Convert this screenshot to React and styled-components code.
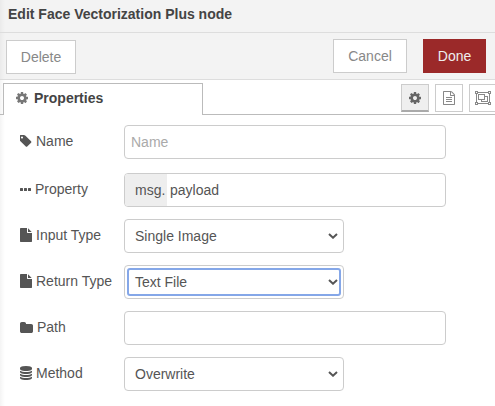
import React from "react";
import styled, { createGlobalStyle, css } from "styled-components";

const GlobalStyle = createGlobalStyle`
  * { box-sizing: border-box; }
  html, body { margin: 0; background: #fff; overflow: hidden; }
  body, input, button { font-family: "Liberation Sans", Arial, sans-serif; font-size: 14px; line-height: 20px; }
`;

const Tray = styled.main`
  width: 495px;
  height: 406px;
  overflow: hidden;
  color: #555;
  background: linear-gradient(to right, rgba(0, 0, 0, 0.045), transparent 5px), #fff;
`;

const Header = styled.header`
  height: 33px;
  padding: 4px 8px;
  border-bottom: 1px solid #ddd;
  background: linear-gradient(to right, rgba(0, 0, 0, 0.035), transparent 5px), #f3f3f3;
  color: #444;
  font-weight: bold;
`;

const Toolbar = styled.div`
  display: flex;
  align-items: flex-start;
  height: 47px;
  padding: 6px 9px 0 6px;
  border-bottom: 1px solid #ddd;
  background: linear-gradient(to right, rgba(0, 0, 0, 0.035), transparent 5px), #f3f3f3;
`;

const Button = styled.button`
  width: ${(p) => p.$width}px;
  height: 34px;
  padding: 0;
  border: 1px solid ${(p) => (p.$primary ? "#9b2929" : "#ccc")};
  background: ${(p) => (p.$primary ? "#9b2929" : "#fff")};
  color: ${(p) => (p.$primary ? "#eee" : "#888")};
  ${(p) => p.$push && css`margin-left: auto; margin-right: 16px;`}
  ${(p) => p.$drop && css`margin-top: 1px;`}
`;

const TabBar = styled.div`
  display: flex;
  height: 35px;
  padding-top: 3px;
`;

const TabEdge = styled.div`
  flex: none;
  width: 3px;
  border-bottom: 1px solid #bbb;
`;

const Tab = styled.div`
  flex: none;
  display: flex;
  align-items: center;
  gap: 6px;
  width: 200px;
  padding: 0 0 3px 12px;
  border: 1px solid #bbb;
  border-bottom: 0;
  background: #fff;
  color: #444;
  font-weight: bold;
  svg { color: #777; }
`;

const TabActions = styled.div`
  flex: 1;
  min-width: 0;
  display: flex;
  gap: 6px;
  padding: 1px 0 0 198px;
  border-bottom: 1px solid #bbb;
`;

const IconButton = styled.button`
  flex: 0 0 28px;
  display: flex;
  align-items: center;
  justify-content: center;
  height: 28px;
  padding: 0;
  border: 1px solid #ccc;
  background: #fff;
  color: #888;
  ${(p) => p.$selected && css`
    border-bottom: 2px solid #aaa;
    background: #efefef;
    color: #666;
  `}
`;

const Form = styled.div`
  display: flex;
  flex-direction: column;
  gap: 12px;
  padding: 10px 49px 0 20px;
`;

const Row = styled.div`
  display: grid;
  grid-template-columns: 104px 1fr;
  align-items: center;
  height: 34px;
  margin-bottom: ${(p) => p.$after || 0}px;
`;

const Label = styled.label`
  display: flex;
  align-items: center;
  gap: 4px;
  height: 20px;
  margin-bottom: 2px;
  white-space: nowrap;
`;

const frame = css`
  height: 34px;
  border: 1px solid #ccc;
  border-radius: 4px;
  background: #fff;
`;

const Input = styled.input`
  ${frame}
  width: 322px;
  padding: 0 6px;
  outline: 0;
  color: #555;
  &::placeholder { color: #aaa; opacity: 1; }
`;

const TypedInput = styled.div`
  ${frame}
  display: flex;
  width: 322px;
  overflow: hidden;
  line-height: 32px;
`;

const TypePrefix = styled.span`
  width: 42px;
  padding-left: 10px;
  background: #eee;
`;

const TypedValue = styled.span`
  padding-left: 3px;
`;

const SelectFrame = styled.div`
  ${frame}
  width: 220px;
  padding: 2px;
`;

const SelectValue = styled.div`
  display: flex;
  align-items: center;
  justify-content: space-between;
  width: 214px;
  height: 28px;
  padding: 0 1px 0 6px;
  border: 2px solid ${(p) => (p.$focused ? "#85a7e8" : "transparent")};
  border-radius: 3px;
`;

const Svg = styled.svg`
  display: block;
  flex: none;
  fill: currentColor;
`;

const ICONS = {
  cog: { w: 12, h: 12, box: "0 128 1536 1536", d: "M1024 896q0-106-75-181t-181-75-181 75-75 181 75 181 181 75 181-75 75-181zm512-109v222q0 12-8 23t-20 13l-185 28q-19 54-39 91 35 50 107 138 10 12 10 25t-9 23q-27 37-99 108t-94 71q-12 0-26-9l-138-108q-44 23-91 38-16 136-29 186-7 28-36 28h-222q-14 0-24.5-8.5t-11.5-21.5l-28-184q-49-16-90-37l-141 107q-10 9-25 9-14 0-25-11-126-114-165-168-7-10-7-23 0-12 8-23 15-21 51-66.5t54-70.5q-27-50-41-99l-183-27q-13-2-21-12.5t-8-23.5v-222q0-12 8-23t19-13l186-28q14-46 39-92-40-57-107-138-10-12-10-24 0-10 9-23 26-36 98.5-107.5t94.5-71.5q13 0 26 10l138 107q44-23 91-38 16-136 29-186 7-28 36-28h222q14 0 24.5 8.5t11.5 21.5l28 184q49 16 90 37l142-107q9-9 24-9 13 0 25 10 129 119 165 170 7 8 7 22 0 12-8 23-15 21-51 66.5t-54 70.5q26 50 41 98l183 28q13 2 21 12.5t8 23.5z" },
  tag: { w: 12, h: 12, box: "0 128 1536 1536", d: "M384 448q0-53-37.5-90.5t-90.5-37.5-90.5 37.5-37.5 90.5 37.5 90.5 90.5 37.5 90.5-37.5 37.5-90.5zm1067 576q0 53-37 90l-491 492q-39 37-91 37-53 0-90-37l-715-716q-38-37-64.5-101t-26.5-117v-416q0-52 38-90t90-38h416q53 0 117 26.5t102 64.5l715 714q37 39 37 91z" },
  dots: { w: 11, h: 3, box: "0 0 11 3", d: "M.6 0h1.8q.6 0 .6.6v1.8q0 .6-.6.6H.6q-.6 0-.6-.6V.6Q0 0 .6 0zm4 0h1.8q.6 0 .6.6v1.8q0 .6-.6.6H4.600q-.6 0-.6-.6V.6q0-.6.6-.6zm4 0h1.8q.6 0 .6.6v1.800q0 .6-.6.6H8.600q-.6 0-.6-.6V.6q0-.6.6-.6z" },
  file: { w: 12, h: 14, box: "0 0 1536 1792", d: "M1024 512v-472q22 14 36 28l408 408q14 14 28 36h-472zm-128 32q0 40 28 68t68 28h544v1056q0 40-28 68t-68 28h-1344q-40 0-68-28t-28-68v-1600q0-40 28-68t68-28h800v544z" },
  folder: { w: 13, h: 11, box: "0 128 1664 1408", d: "M1664 608v704q0 92-66 158t-158 66h-1216q-92 0-158-66t-66-158v-960q0-92 66-158t158-66h320q92 0 158 66t66 158v32h672q92 0 158 66t66 158z" },
  database: { w: 12, h: 14, box: "0 0 1536 1792", d: "M768 768q237 0 443-43t325-127v170q0 69-103 128t-280 93.5-385 34.5-385-34.5-280-93.5-103-128v-170q119 84 325 127t443 43zm0 768q237 0 443-43t325-127v170q0 69-103 128t-280 93.5-385 34.5-385-34.5-280-93.5-103-128v-170q119 84 325 127t443 43zm0-384q237 0 443-43t325-127v170q0 69-103 128t-280 93.5-385 34.5-385-34.5-280-93.5-103-128v-170q119 84 325 127t443 43zm0-1152q208 0 385 34.5t280 93.5 103 128v128q0 69-103 128t-280 93.5-385 34.5-385-34.5-280-93.5-103-128v-128q0-69 103-128t280-93.5 385-34.5z" },
  document: { w: 12, h: 14, box: "0 0 1536 1792", d: "M1468 380q28 28 48 76t20 88v1152q0 40-28 68t-68 28h-1344q-40 0-68-28t-28-68v-1600q0-40 28-68t68-28h896q40 0 88 20t76 48zm-444-244v376h376q-10-29-22-41l-313-313q-12-12-41-22zm384 1528v-1024h-416q-40 0-68-28t-28-68v-416h-768v1536h1280zm-1024-864q0-14 9-23t23-9h704q14 0 23 9t9 23v64q0 14-9 23t-23 9h-704q-14 0-23-9t-9-23v-64zm736 224q14 0 23 9t9 23v64q0 14-9 23t-23 9h-704q-14 0-23-9t-9-23v-64q0-14 9-23t23-9h704zm0 256q14 0 23 9t9 23v64q0 14-9 23t-23 9h-704q-14 0-23-9t-9-23v-64q0-14 9-23t23-9h704z" },
  group: { w: 16, h: 14, box: "0 0 16 14", d: "M0 0h3v1h10V0h3v3h-1v8h1v3h-3v-1H3v1H0v-3h1V3H0zM1 1v1h1V1zm13 0v1h1V1zM3 2v1H2v8h1v1h10v-1h1V3h-1V2zM1 12v1h1v-1zm13 0v1h1v-1zM3 3h7v2h3v6H6V9H3zm1 1v4h5V4zm6 2v3H7v1h5V6z" },
};

function Icon({ name }) {
  const icon = ICONS[name];
  return (
    <Svg width={icon.w} height={icon.h} viewBox={icon.box} aria-hidden="true">
      <path fillRule={name === "group" ? "evenodd" : "nonzero"} d={icon.d} />
    </Svg>
  );
}

const ChevronSvg = styled.svg`
  display: block;
  fill: none;
  stroke: #555;
  stroke-width: 2;
`;

function Select({ value, focused }) {
  return (
    <SelectFrame role="combobox" aria-label={value} tabIndex={0}>
      <SelectValue $focused={focused}>
        {value}
        <ChevronSvg width="10" height="6" viewBox="0 0 10 6">
          <path d="M1 1l4 3.700L9 1" />
        </ChevronSvg>
      </SelectValue>
    </SelectFrame>
  );
}

function Field({ icon, label, after, children }) {
  return (
    <Row $after={after}>
      <Label><Icon name={icon} />{label}</Label>
      {children}
    </Row>
  );
}

export default function App() {
  return (
    <>
      <GlobalStyle />
      <Tray>
        <Header>Edit Face Vectorization Plus node</Header>
        <Toolbar>
          <Button $width={70} $drop>Delete</Button>
          <Button $width={74} $push>Cancel</Button>
          <Button $width={63} $primary>Done</Button>
        </Toolbar>
        <TabBar>
          <TabEdge />
          <Tab><Icon name="cog" />Properties</Tab>
          <TabActions>
            <IconButton $selected aria-label="Properties"><Icon name="cog" /></IconButton>
            <IconButton aria-label="Description"><Icon name="document" /></IconButton>
            <IconButton aria-label="Appearance"><Icon name="group" /></IconButton>
          </TabActions>
        </TabBar>
        <Form>
          <Field icon="tag" label="Name" after={2}><Input placeholder="Name" /></Field>
          <Field icon="dots" label="Property">
            <TypedInput><TypePrefix>msg.</TypePrefix><TypedValue>payload</TypedValue></TypedInput>
          </Field>
          <Field icon="file" label="Input Type"><Select value="Single Image" /></Field>
          <Field icon="file" label="Return Type"><Select value="Text File" focused /></Field>
          <Field icon="folder" label="Path"><Input aria-label="Path" /></Field>
          <Field icon="database" label="Method"><Select value="Overwrite" /></Field>
        </Form>
      </Tray>
    </>
  );
}
